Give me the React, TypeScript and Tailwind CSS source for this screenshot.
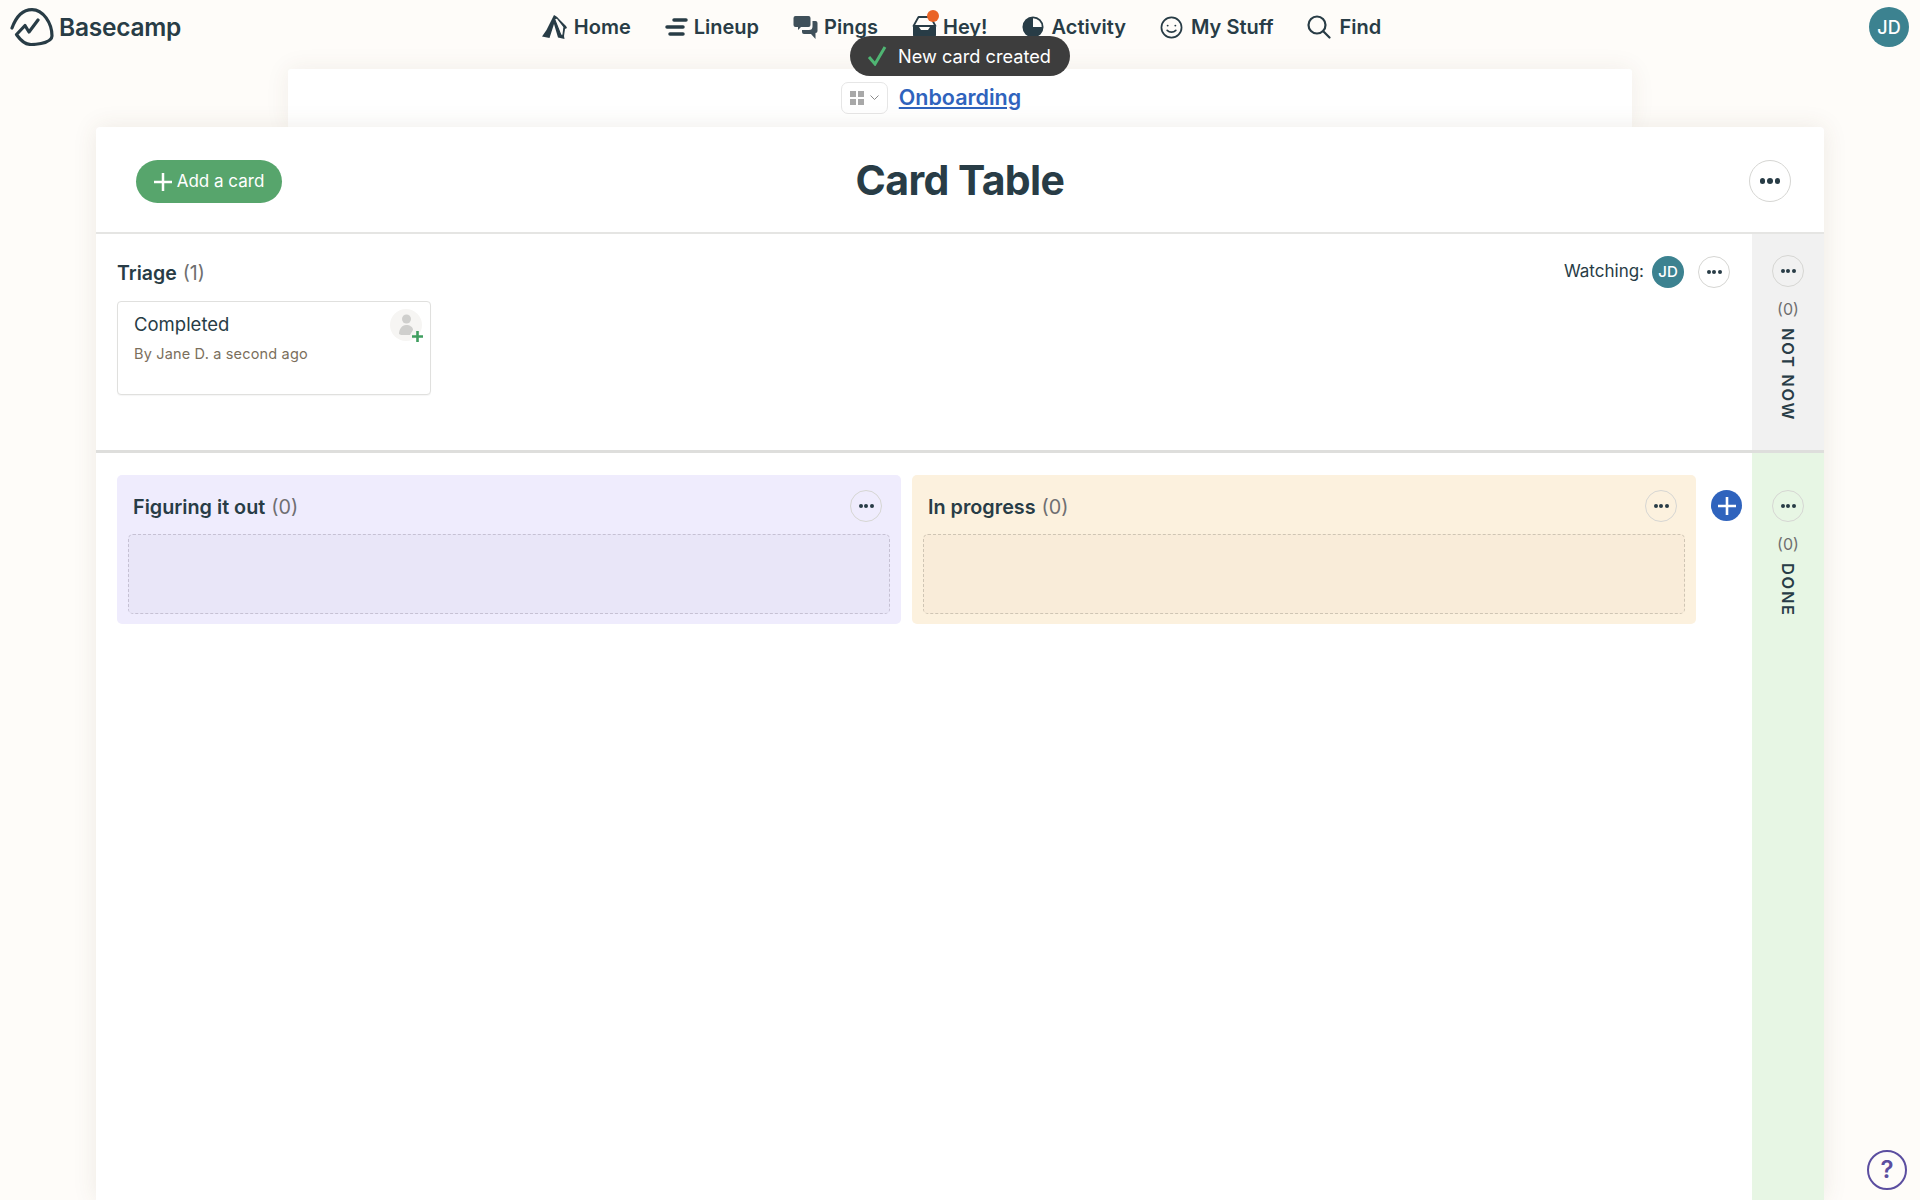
import type { ReactNode } from "react";

const ink = "#283c46";

function Logo() {
    return (
        <svg width="44" height="38" viewBox="0 0 44 38" fill="none" stroke={ink} strokeWidth="3.200" strokeLinecap="round" strokeLinejoin="round">
            <path d="M2 20C6 9 13 1.600 22 1.600C33 1.600 42 15 42 28C42 32 38 34 31 35.500C27 36.300 24 36.500 21 36.500C13 36.500 9 30 6.500 26.500L15 17.500L19 24L28 12" />
        </svg>
    );
}

function HomeIcon() {
    return (
        <svg width="27" height="26" viewBox="0 0 27 26" fill={ink}>
            <path d="M13 1l2.500 1.500L25 12l1 2-2 1-1 7 .5 3-6.500-1.500L13 10 8.500 24 1 22.500 5.500 16z" />
            <path d="M13 14l2.500 8.500h-5z" fill="#fefcf9" />
            <path d="M16 4l7 9-1 8-2 .5L13.500 5z" fill="#fefcf9" stroke={ink} strokeWidth="1.200" />
        </svg>
    );
}

function LineupIcon() {
    return (
        <svg width="23" height="20" viewBox="0 0 23 20" fill="none" stroke={ink} strokeWidth="3.500" strokeLinecap="round">
            <path d="M9 3h12" />
            <path d="M2 10h16" />
            <path d="M5 17h13" />
        </svg>
    );
}

function PingsIcon() {
    return (
        <svg width="25" height="25" viewBox="0 0 25 25" fill="#3f505a">
            <path d="M2.500 1h13a2 2 0 0 1 2 2v7a2 2 0 0 1-2 2H8l-3 3v-3H2.500a2 2 0 0 1-2-2V3a2 2 0 0 1 2-2z" />
            <path d="M19.500 6h3a2 2 0 0 1 2 2v8a2 2 0 0 1-2 2v6l-4.500-5h-7a2 2 0 0 1-2-2v-2h7a3.500 3.500 0 0 0 3.500-3.500z" />
        </svg>
    );
}

function HeyIcon() {
    return (
        <svg width="25" height="25" viewBox="0 0 25 25" fill="none">
            <path d="M6.500 2h12L23.500 11H1.500z" stroke={ink} strokeWidth="1.800" strokeLinejoin="round" />
            <path d="M1 12h6l2 3h7l2-3h6v8a4 4 0 0 1-4 4H5a4 4 0 0 1-4-4z" fill={ink} />
        </svg>
    );
}

function ActivityIcon() {
    return (
        <svg width="22" height="22" viewBox="0 0 24 24">
            <circle cx="12" cy="12" r="10.500" fill="#fefcf9" stroke={ink} strokeWidth="2" />
            <path d="M12 1.500A10.500 10.500 0 1 0 22.500 12H12z" fill={ink} />
        </svg>
    );
}

function StuffIcon() {
    return (
        <svg width="23" height="23" viewBox="0 0 24 24" fill="none" stroke={ink} strokeWidth="1.800" strokeLinecap="round">
            <circle cx="12" cy="12" r="10.500" />
            <circle cx="8" cy="10" r="1" fill={ink} stroke="none" />
            <circle cx="16" cy="10" r="1" fill={ink} stroke="none" />
            <path d="M7.500 15c2.500 2.500 6.500 2.500 9 0" />
        </svg>
    );
}

function FindIcon() {
    return (
        <svg width="24" height="24" viewBox="0 0 24 24" fill="none" stroke={ink} strokeWidth="2.200" strokeLinecap="round">
            <circle cx="10" cy="10" r="8.500" />
            <path d="M16.500 16.500l6 6" />
        </svg>
    );
}

function NavItem({ icon, label, badge, wide }: { icon: ReactNode; label: string; badge?: boolean; wide?: boolean }) {
    return (
        <a className={`relative flex items-center text-[20px] leading-none font-semibold text-[#283c46] ${wide ? "gap-[8px]" : "gap-[6px]"}`}>
            {icon}
            {label}
            {badge && <span className="absolute left-[15px] -top-[5px] size-[12px] rounded-full bg-[#ea6426]" />}
        </a>
    );
}

function Dots({ large, className }: { large?: boolean; className?: string }) {
    return (
        <button className={`flex shrink-0 items-center justify-center rounded-full border border-[#d6d6d3] ${large ? "size-[42px] gap-[2px]" : "size-[32px] gap-[1.500px]"} ${className ?? ""}`}>
            <span className={`rounded-full bg-[#283c46] ${large ? "size-[5.500px]" : "size-[4px]"}`} />
            <span className={`rounded-full bg-[#283c46] ${large ? "size-[5.500px]" : "size-[4px]"}`} />
            <span className={`rounded-full bg-[#283c46] ${large ? "size-[5.500px]" : "size-[4px]"}`} />
        </button>
    );
}

function Column({ title, bg, well, border }: { title: string; bg: string; well: string; border: string }) {
    return (
        <div className={`h-[149px] flex-1 rounded-[5px] px-[11px] ${bg}`}>
            <div className="flex h-[59px] items-center justify-between pl-[5px] pr-[8px] pt-[3px]">
                <h3 className="mt-[4px] text-[19.800px] font-semibold text-[#283c46]">
                    {title} <span className="ml-[1px] font-normal text-[#6f6f72]">(0)</span>
                </h3>
                <Dots />
            </div>
            <div className={`h-[80px] rounded-[5px] border border-dashed ${well} ${border}`} />
        </div>
    );
}

function SideColumn({ label, bg, top }: { label: string; bg: string; top: string }) {
    return (
        <div className={`flex w-[72px] shrink-0 flex-col items-center ${top} ${bg}`}>
            <Dots />
            <span className="mt-[10px] text-[16px] leading-[24px] text-[#6f6f6f]">(0)</span>
            <span className="mt-[7px] text-[16.500px] font-semibold leading-[20px] tracking-[0.1em] text-[#283c46] [writing-mode:vertical-rl]">
                {label}
            </span>
        </div>
    );
}

export default function App() {
    return (
        <div className="relative flex h-[1200px] flex-col overflow-hidden bg-[#fefcf9] font-['Inter',sans-serif] text-[#283c46]">
            <header className="relative flex h-[69px] shrink-0 items-start justify-center pt-[14px]">
                <div className="absolute left-[10px] top-[8px] flex items-center gap-[5px]">
                    <Logo />
                    <span className="text-[24.500px] font-semibold leading-none tracking-[-0.01em]">Basecamp</span>
                </div>
                <nav className="flex h-[26px] items-center gap-[34px] pl-[2px]">
                    <NavItem icon={<HomeIcon />} label="Home" />
                    <NavItem icon={<LineupIcon />} label="Lineup" />
                    <NavItem icon={<PingsIcon />} label="Pings" />
                    <NavItem icon={<HeyIcon />} label="Hey!" badge />
                    <NavItem icon={<ActivityIcon />} label="Activity" wide />
                    <NavItem icon={<StuffIcon />} label="My Stuff" wide />
                    <NavItem icon={<FindIcon />} label="Find" wide />
                </nav>
                <div className="absolute right-[11px] top-[7px] flex size-[40px] items-center justify-center rounded-full bg-[#3c8290] text-[18px] font-medium text-white">
                    JD
                </div>
            </header>

            <div className="absolute left-[850px] top-[36px] z-10 flex h-[40px] w-[220px] items-center gap-[11px] rounded-full bg-[#3d3d3d] pl-[17px] text-[18.200px] text-white">
                <svg width="20" height="20" viewBox="0 0 20 20" fill="none" stroke="#4fb573" strokeWidth="3">
                    <path d="M2 11l6 7L18 1" />
                </svg>
                <span className="mt-[1px]">New card created</span>
            </div>

            <div className="mx-auto flex h-[58px] w-[1344px] shrink-0 items-center justify-center rounded-t-[3px] bg-white shadow-[0_0_24px_rgba(90,70,40,0.08)]">
                <div className="relative -mt-[2px]">
                    <button className="absolute right-full top-[1px] mr-[11px] flex h-[32px] w-[47px] items-center justify-center gap-[6px] rounded-[7px] border border-[#e6e6e6] bg-white">
                        <span className="grid grid-cols-2 gap-[1.500px]">
                            <i className="size-[6.500px] bg-[#a8a8a8]" />
                            <i className="size-[6.500px] bg-[#a8a8a8]" />
                            <i className="size-[6.500px] bg-[#a8a8a8]" />
                            <i className="size-[6.500px] bg-[#a8a8a8]" />
                        </span>
                        <svg width="9" height="6" viewBox="0 0 9 6" fill="none" stroke="#8a8a8a" strokeWidth="1">
                            <path d="M.5.5l4 4 4-4" />
                        </svg>
                    </button>
                    <a className="text-[21.500px] font-semibold text-[#2f63bd] underline underline-offset-[2px]">Onboarding</a>
                </div>
            </div>

            <main className="relative mx-auto flex w-[1728px] flex-1 flex-col rounded-t-[4px] bg-white shadow-[0_0_24px_rgba(90,70,40,0.1)]">
                <div className="relative flex h-[107px] shrink-0 items-center justify-center border-b-2 border-[#e5e5e3]">
                    <button className="absolute left-[40px] top-[33px] flex h-[43px] w-[146px] items-center justify-center gap-[5px] rounded-full bg-[#57a56c] text-[17px] text-white">
                        <svg width="18" height="18" viewBox="0 0 18 18" stroke="white" strokeWidth="2.500">
                            <path d="M9 0v18M0 9h18" />
                        </svg>
                        Add a card
                    </button>
                    <h1 className="mt-[2px] text-[41px] font-bold tracking-[-0.015em] text-[#283c46]">Card Table</h1>
                    <Dots large className="absolute right-[33px] top-[33px]" />
                </div>

                <div className="flex h-[219px] shrink-0 border-b-[3px] border-[#dededc]">
                    <section className="relative flex-1 px-[21px] pt-[25px]">
                        <h2 className="text-[19.500px] leading-[28px] font-semibold">
                            Triage <span className="ml-[1px] font-normal text-[#6f6f6f]">(1)</span>
                        </h2>
                        <div className="absolute right-[22px] top-[22px] flex items-center">
                            <span className="mr-[8px] text-[17px] text-[#283c46]">Watching:</span>
                            <span className="flex size-[32px] items-center justify-center rounded-full bg-[#3c8290] text-[15px] font-medium text-white">JD</span>
                            <Dots className="ml-[14px]" />
                        </div>
                        <div className="relative mt-[14px] h-[94px] w-[314px] rounded-[4px] border border-[#e0e0de] bg-white px-[16px] pt-[9px] shadow-[0_1px_1px_rgba(0,0,0,0.04)]">
                            <p className="text-[18.500px] leading-[26px] text-[#283c46]">Completed</p>
                            <p className="mt-[5px] text-[14.500px] leading-[24px] tracking-[0.012em] text-[#7b6f5c]">By Jane D. a second ago</p>
                            <div className="absolute right-[8px] top-[7px] flex size-[32px] items-center justify-center rounded-full bg-[#f6f5f3]">
                                <svg width="16" height="22" viewBox="0 0 16 22" fill="#cfcfcd">
                                    <circle cx="8.500" cy="5" r="4.500" />
                                    <path d="M1 20c0-5 3-9 7-9s7 2 7 5l-3 5H3z" />
                                </svg>
                                <svg className="absolute -bottom-[1px] -right-[1px]" width="11" height="11" viewBox="0 0 11 11" stroke="#3f9e5f" strokeWidth="2.600">
                                    <path d="M5.500 0v11M0 5.500h11" />
                                </svg>
                            </div>
                        </div>
                    </section>
                    <SideColumn label="NOT NOW" bg="bg-[#f1f1f1]" top="pt-[21px]" />
                </div>

                <div className="flex flex-1">
                    <section className="flex flex-1 items-start pl-[21px] pr-[56px] pt-[22px]">
                        <div className="flex w-full gap-[11px]">
                            <Column title="Figuring it out" bg="bg-[#efecfd]" well="bg-[#e9e6f8]" border="border-[#c6c1d4]" />
                            <Column title="In progress" bg="bg-[#fcf1de]" well="bg-[#f9ecd9]" border="border-[#cfc5b4]" />
                        </div>
                    </section>
                    <SideColumn label="DONE" bg="bg-[#e7f6e4]" top="pt-[37px]" />
                    <button className="absolute right-[82px] top-[363px] flex size-[31px] items-center justify-center rounded-full bg-[#2f63bd]">
                        <svg width="20" height="20" viewBox="0 0 20 20" stroke="white" strokeWidth="2.600">
                            <path d="M10 1v18M1 10h18" />
                        </svg>
                    </button>
                </div>
            </main>

            <button className="absolute bottom-[10px] right-[13px] flex size-[40px] items-center justify-center rounded-full border-[2.500px] border-[#5b4ea0] text-[24px] font-semibold text-[#5b4ea0]">
                ?
            </button>
        </div>
    );
}
